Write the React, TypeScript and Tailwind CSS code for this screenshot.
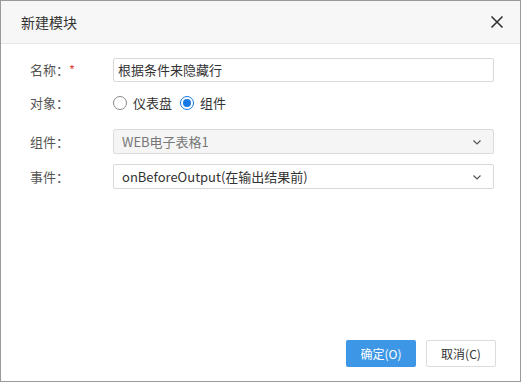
import React from "react";

function Chevron() {
  return (
    <svg width="12" height="12" viewBox="0 0 12 12" fill="none" stroke="#555" strokeWidth="1.2">
      <path d="M2.5 4.5 L6 8 L9.5 4.5" />
    </svg>
  );
}

export default function App() {
  const font = { fontFamily: '"Microsoft YaHei", "Noto Sans CJK SC", sans-serif' };
  return (
    <div className="w-[522px] h-[382px] bg-white" style={font}>
      <div className="w-[521px] h-[382px] border border-[#9a9a9a] flex flex-col">
        {/* Header */}
        <div className="h-[43px] bg-[#f7f7f7] border-b border-[#e6e6e6] flex items-center justify-between pl-[20px] pr-[16px]">
          <span className="text-[14px] text-[#333]">新建模块</span>
          <svg width="14" height="14" viewBox="0 0 14 14" stroke="#333" strokeWidth="1.6">
            <path d="M1.5 1.5 L12.5 12.5 M12.5 1.5 L1.5 12.5" />
          </svg>
        </div>

        {/* Body */}
        <div className="flex-1 flex flex-col pl-[29px] pr-[24px] pt-[14px] text-[13px] text-[#333]">
          <div className="flex items-center h-[24px]">
            <span className="w-[83px] text-[#555]">
              名称：<span className="text-[#e5483e]">*</span>
            </span>
            <div className="flex-1 h-[24px] mr-[2px] border border-[#d9d9d9] rounded-[2px] flex items-center px-[4px]">
              根据条件来隐藏行
            </div>
          </div>

          <div className="flex items-center h-[24px] mt-[9px]">
            <span className="w-[83px] text-[#555]">对象：</span>
            <label className="flex items-center gap-[6px]">
              <span className="w-[14px] h-[14px] rounded-full border border-[#888] bg-white" />
              <span>仪表盘</span>
            </label>
            <label className="flex items-center gap-[6px] ml-[8px]">
              <span className="w-[14px] h-[14px] rounded-full border border-[#1677e5] flex items-center justify-center">
                <span className="w-[8px] h-[8px] rounded-full bg-[#1677e5]" />
              </span>
              <span>组件</span>
            </label>
          </div>

          <div className="flex items-center h-[25px] mt-[14px]">
            <span className="w-[83px] text-[#555]">组件：</span>
            <div className="flex-1 h-[25px] mr-[2px] border border-[#dcdcdc] bg-[#f5f5f5] rounded-[2px] flex items-center justify-between pl-[8px] pr-[10px] text-[#777]">
              <span>WEB电子表格1</span>
              <Chevron />
            </div>
          </div>

          <div className="flex items-center h-[25px] mt-[10px]">
            <span className="w-[83px] text-[#555]">事件：</span>
            <div className="flex-1 h-[25px] mr-[2px] border border-[#d9d9d9] bg-white rounded-[2px] flex items-center justify-between pl-[8px] pr-[10px]">
              <span>onBeforeOutput(在输出结果前)</span>
              <Chevron />
            </div>
          </div>

          <div className="flex-1" />

          <div className="flex justify-end gap-[10px] pb-[14px]">
            <button className="w-[70px] h-[27px] bg-[#3d97e6] text-white text-[12px] rounded-[2px]">
              确定(O)
            </button>
            <button className="w-[70px] h-[27px] bg-white border border-[#dcdcdc] text-[#333] text-[12px] rounded-[2px]">
              取消(C)
            </button>
          </div>
        </div>
      </div>
    </div>
  );
}
